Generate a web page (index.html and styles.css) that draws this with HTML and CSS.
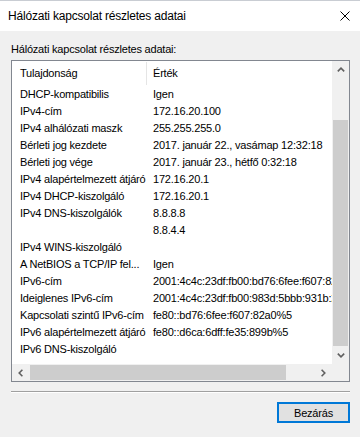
FILE: index.html
```html
<!DOCTYPE html>
<html lang="hu">
<head>
<meta charset="utf-8">
<title>Hálózati kapcsolat részletes adatai</title>
<link rel="stylesheet" href="styles.css">
</head>
<body>
<div class="titlebar">
  <span class="title">Hálózati kapcsolat részletes adatai</span>
  <svg class="close" viewBox="0 0 10 10" width="10" height="10"><path d="M0.5 0.5 L9.5 9.5 M9.5 0.5 L0.5 9.5" stroke="#000" stroke-width="1" fill="none"/></svg>
</div>
<div class="content">
  <div class="label">Hálózati kapcsolat részletes adatai:</div>
  <div class="listbox">
    <div class="view">
      <div class="header">
        <div class="hcell key">Tulajdonság</div>
        <div class="hcell val">Érték</div>
      </div>
      <div class="row"><div class="cell key">DHCP-kompatibilis</div><div class="cell val">Igen</div></div>
      <div class="row"><div class="cell key">IPv4-cím</div><div class="cell val">172.16.20.100</div></div>
      <div class="row"><div class="cell key">IPv4 alhálózati maszk</div><div class="cell val">255.255.255.0</div></div>
      <div class="row"><div class="cell key">Bérleti jog kezdete</div><div class="cell val">2017. január 22., vasámap 12:32:18</div></div>
      <div class="row"><div class="cell key">Bérleti jog vége</div><div class="cell val">2017. január 23., hétfő 0:32:18</div></div>
      <div class="row"><div class="cell key">IPv4 alapértelmezett átjáró</div><div class="cell val">172.16.20.1</div></div>
      <div class="row"><div class="cell key">IPv4 DHCP-kiszolgáló</div><div class="cell val">172.16.20.1</div></div>
      <div class="row"><div class="cell key">IPv4 DNS-kiszolgálók</div><div class="cell val">8.8.8.8</div></div>
      <div class="row"><div class="cell key"></div><div class="cell val">8.8.4.4</div></div>
      <div class="row"><div class="cell key">IPv4 WINS-kiszolgáló</div><div class="cell val"></div></div>
      <div class="row"><div class="cell key">A NetBIOS a TCP/IP fel...</div><div class="cell val">Igen</div></div>
      <div class="row"><div class="cell key">IPv6-cím</div><div class="cell val">2001:4c4c:23df:fb00:bd76:6fee:f607:82a0</div></div>
      <div class="row"><div class="cell key">Ideiglenes IPv6-cím</div><div class="cell val">2001:4c4c:23df:fb00:983d:5bbb:931b:2c1e</div></div>
      <div class="row"><div class="cell key">Kapcsolati szintű IPv6-cím</div><div class="cell val">fe80::bd76:6fee:f607:82a0%5</div></div>
      <div class="row"><div class="cell key">IPv6 alapértelmezett átjáró</div><div class="cell val">fe80::d6ca:6dff:fe35:899b%5</div></div>
      <div class="row"><div class="cell key">IPv6 DNS-kiszolgáló</div><div class="cell val"></div></div>
    </div>
    <div class="vscroll">
      <div class="sbtn"><svg viewBox="0 0 8 5" width="8" height="5"><polyline points="0.8,4.4 4,1.2 7.2,4.4" stroke="#606060" stroke-width="1.6" fill="none"/></svg></div>
      <div class="vtrack"><div class="vthumb"></div></div>
      <div class="sbtn"><svg viewBox="0 0 8 5" width="8" height="5"><polyline points="0.8,0.6 4,3.8 7.2,0.6" stroke="#606060" stroke-width="1.6" fill="none"/></svg></div>
    </div>
    <div class="hscroll">
      <div class="sbtn"><svg viewBox="0 0 5 8" width="5" height="8"><polyline points="4.4,0.8 1.2,4 4.4,7.2" stroke="#606060" stroke-width="1.6" fill="none"/></svg></div>
      <div class="htrack"><div class="hthumb"></div></div>
      <div class="sbtn"><svg viewBox="0 0 5 8" width="5" height="8"><polyline points="0.6,0.8 3.8,4 0.6,7.2" stroke="#606060" stroke-width="1.6" fill="none"/></svg></div>
    </div>
    <div class="corner"></div>
  </div>
  <div class="separator"></div>
  <div class="actions">
    <button class="btn" type="button">Bezárás</button>
  </div>
</div>
</body>
</html>
```
FILE: styles.css
```css
* { box-sizing: border-box; }
html, body { margin: 0; padding: 0; }
body {
  width: 360px;
  height: 437px;
  overflow: hidden;
  background: #f0f0f0;
  color: #000;
  font-family: "Liberation Sans", Arial, sans-serif;
  font-size: 11px;
  letter-spacing: -0.2px;
}
.titlebar {
  height: 31px;
  background: #fff;
  border-top: 1px solid #c9cdd3;
  display: flex;
  align-items: center;
  justify-content: space-between;
  padding: 0 10px 0 8px;
}
.title { font-size: 12px; }
.close { display: block; }
.content { padding: 0 10px 0 11px; }
.label {
  margin-top: 12px;
  height: 13px;
  line-height: 13px;
  margin-bottom: 4px;
  white-space: nowrap;
}
.listbox {
  height: 322px;
  border: 1px solid #828790;
  background: #fff;
  display: grid;
  grid-template-columns: 1fr 17px;
  grid-template-rows: 1fr 17px;
}
.view { overflow: hidden; }
.header {
  height: 25px;
  display: grid;
  grid-template-columns: 135px 1fr;
}
.hcell { line-height: 25px; white-space: nowrap; overflow: hidden; }
.hcell.key { padding-left: 8px; border-right: 1px solid #e5e5e5; margin: 1px 0 1px; line-height: 23px; }
.hcell.val { padding-left: 6px; }
.row {
  height: 17px;
  line-height: 17px;
  display: grid;
  grid-template-columns: 135px 1fr;
  white-space: nowrap;
}
.cell { overflow: hidden; }
.cell.key { padding-left: 8px; }
.cell.val { padding-left: 6px; }
.vscroll {
  background: #f0f0f0;
  display: flex;
  flex-direction: column;
}
.sbtn {
  width: 17px;
  height: 17px;
  flex: none;
  display: flex;
  align-items: center;
  justify-content: center;
}
.sbtn svg { display: block; }
.vtrack { flex: 1; }
.vthumb {
  margin: 42px 1px 0;
  height: 226px;
  background: #cdcdcd;
}
.hscroll {
  background: #f0f0f0;
  display: flex;
}
.htrack { flex: 1; }
.hthumb {
  margin: 1px 0 0 1px;
  width: 256px;
  height: 15px;
  background: #cdcdcd;
}
.corner { background: #f0f0f0; }
.separator {
  margin-top: 9px;
  height: 2px;
  border-top: 1px solid #a0a0a0;
  border-bottom: 1px solid #fff;
}
.actions {
  margin-top: 9px;
  display: flex;
  justify-content: flex-end;
}
.btn {
  width: 73px;
  height: 21px;
  margin: 0;
  padding: 0;
  border: 2px solid #0078d7;
  background: #e1e1e1;
  font-family: "Liberation Sans", Arial, sans-serif;
  font-size: 11px;
  letter-spacing: -0.2px;
  color: #000;
}
```
